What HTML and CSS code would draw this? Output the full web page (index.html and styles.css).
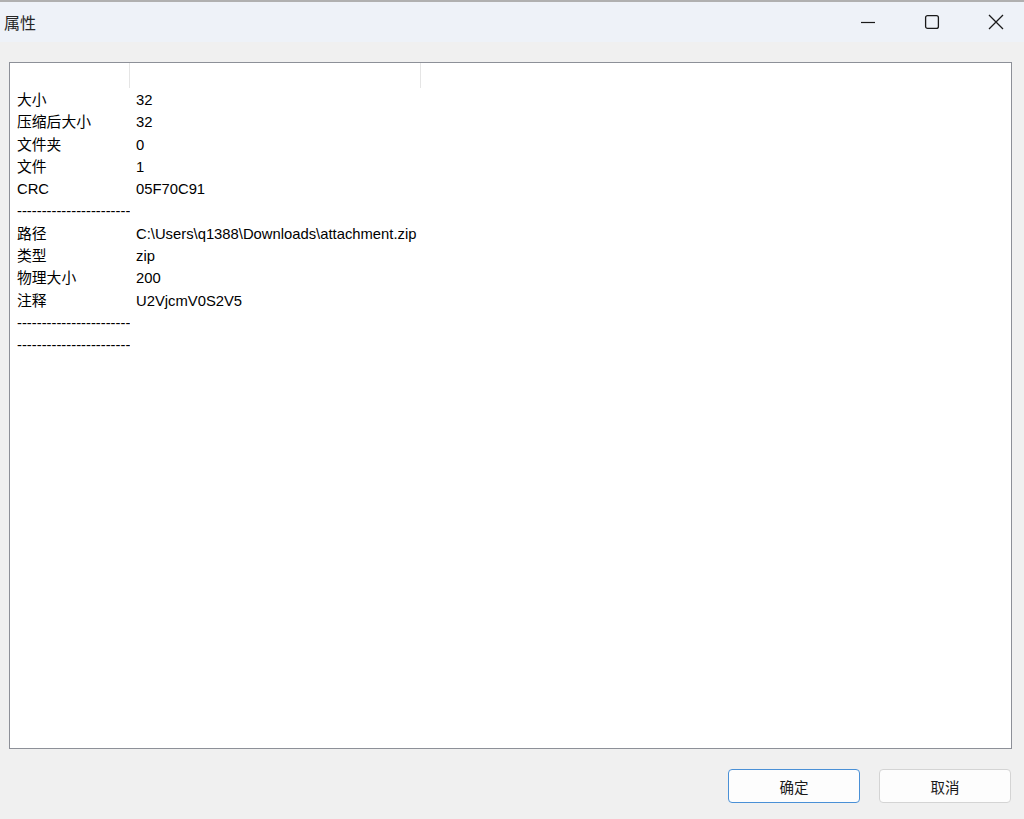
FILE: index.html
```html
<!DOCTYPE html>
<html lang="zh-CN">
<head>
  <meta charset="UTF-8">
  <title>属性</title>
  <link rel="stylesheet" href="styles.css">
</head>
<body>
  <div class="window">
    <div class="titlebar">
      <span class="title">属性</span>
      <div class="controls">
        <span class="ctl">
          <svg width="16" height="16" viewBox="0 0 16 16"><path d="M1 8.5h14" stroke="#1a1a1a" stroke-width="1.2" fill="none"/></svg>
        </span>
        <span class="ctl">
          <svg width="16" height="16" viewBox="0 0 16 16"><rect x="1.6" y="1.6" width="12.8" height="12.8" rx="2" stroke="#1a1a1a" stroke-width="1.3" fill="none"/></svg>
        </span>
        <span class="ctl">
          <svg width="16" height="16" viewBox="0 0 16 16"><path d="M1 1L15 15M15 1L1 15" stroke="#1a1a1a" stroke-width="1.3" fill="none"/></svg>
        </span>
      </div>
    </div>

    <div class="content">
      <div class="listview">
        <div class="row header">
          <div class="cell"></div>
          <div class="cell"></div>
          <div class="cell last"></div>
        </div>
        <div class="row"><div class="cell">大小</div><div class="cell">32</div></div>
        <div class="row"><div class="cell">压缩后大小</div><div class="cell">32</div></div>
        <div class="row"><div class="cell">文件夹</div><div class="cell">0</div></div>
        <div class="row"><div class="cell">文件</div><div class="cell">1</div></div>
        <div class="row"><div class="cell">CRC</div><div class="cell">05F70C91</div></div>
        <div class="row"><div class="cell">-----------------------</div><div class="cell"></div></div>
        <div class="row"><div class="cell">路径</div><div class="cell">C:\Users\q1388\Downloads\attachment.zip</div></div>
        <div class="row"><div class="cell">类型</div><div class="cell">zip</div></div>
        <div class="row"><div class="cell">物理大小</div><div class="cell">200</div></div>
        <div class="row"><div class="cell">注释</div><div class="cell">U2VjcmV0S2V5</div></div>
        <div class="row"><div class="cell">-----------------------</div><div class="cell"></div></div>
        <div class="row"><div class="cell">-----------------------</div><div class="cell"></div></div>
      </div>

      <div class="buttons">
        <button class="btn default">确定</button>
        <button class="btn">取消</button>
      </div>
    </div>
  </div>
</body>
</html>
```

FILE: styles.css
```css
html, body { margin: 0; padding: 0; }
body {
  width: 1024px; height: 819px; overflow: hidden;
  background: #f0f0f0;
  font-family: "Liberation Sans", "Noto Sans CJK SC", Arial, sans-serif;
  color: #000;
}
.window { display: flex; flex-direction: column; height: 100%; }

.titlebar {
  height: 40px;
  border-top: 2px solid #b0b0b0;
  background: #eef2f8;
  display: flex; align-items: center; justify-content: space-between;
}
.title { margin-left: 4px; font-size: 16px; color: #262626; }
.controls { display: flex; align-items: center; height: 100%; gap: 24px; padding-right: 8px; }
.ctl { width: 40px; height: 100%; display: flex; align-items: center; justify-content: center; }

.content { flex: 1; display: flex; flex-direction: column; padding: 20px 12px 0 9px; }

.listview {
  height: 685px;
  background: #fff;
  border: 1px solid #8d9098;
  font-size: 14.8px;
  overflow: hidden;
}
.row { display: grid; grid-template-columns: 120px 291px; height: 22.3px; line-height: 22.3px; }
.row.header { height: 26px; grid-template-columns: 120px 291px 1fr; }
.header .cell { border-right: 1px solid #e5e5e5; height: 25px; }
.header .cell.last { border-right: none; }
.cell { padding-left: 7px; white-space: nowrap; overflow: hidden; }
.cell + .cell { padding-left: 6px; }

.buttons { display: flex; justify-content: flex-end; gap: 19px; margin-top: 20px; margin-right: 1px; }
.btn {
  width: 132px; height: 34px;
  background: #fdfdfd;
  border: 1px solid #d4d4d4;
  border-radius: 4px;
  font-family: "Liberation Sans", "Noto Sans CJK SC", sans-serif;
  font-size: 14.5px; color: #1a1a1a;
}
.btn.default { border: 1.5px solid #4a90d6; }
```
